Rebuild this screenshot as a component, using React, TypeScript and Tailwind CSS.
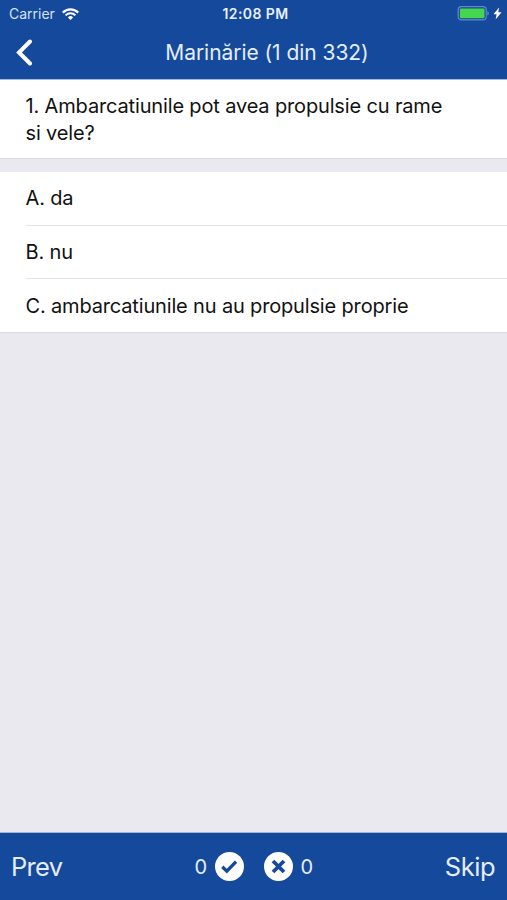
import React from 'react';

const answers = ['A. da', 'B. nu', 'C. ambarcatiunile nu au propulsie proprie'];

function StatusBar() {
  return (
    <div className="grid h-[27px] grid-cols-3 items-center pl-[9px] pr-[5px]">
      <div className="flex items-center gap-[7px]">
        <span className="text-[14px] leading-none text-[#d5e2f7]">Carrier</span>
        <svg width="17" height="12" viewBox="0 0 17 12" fill="none">
          <path d="M.8 4.600a10.900 10.900 0 0 1 15.400 0" stroke="white" strokeWidth="2.200" />
          <path d="M3.600 7.400a6.900 6.900 0 0 1 9.800 0" stroke="white" strokeWidth="2" />
          <path d="M8.500 12 5.900 9.400a3.700 3.700 0 0 1 5.200 0z" fill="white" />
        </svg>
      </div>
      <span className="text-center text-[14px] font-semibold leading-none tracking-[0.4px] text-[#e8f0fc]">12:08 PM</span>
      <div className="flex items-center justify-end gap-1">
        <svg width="32" height="15" viewBox="0 0 32 15">
          <rect x="1.200" y="0.700" width="28" height="13.200" rx="3.200" fill="none" stroke="#5f8bc6" strokeWidth="1.200" />
          <rect x="2.900" y="2.400" width="24.600" height="9.800" rx="1.200" fill="#45d650" />
          <path d="M30.300 5v4.600c1-.4 1.500-1.300 1.500-2.300s-.5-1.900-1.500-2.300z" fill="#5f8bc6" />
        </svg>
        <svg width="9" height="13" viewBox="0 0 9 13">
          <path d="M6.100.4.500 7.300h3.100l-1 5.300 5.900-7.300H5.300z" fill="white" />
        </svg>
      </div>
    </div>
  );
}

export default function App() {
  return (
    <div className="flex h-[900px] w-[507px] flex-col overflow-hidden bg-[#eae9ef] font-['Inter',sans-serif] text-[#111]">
      <header className="h-[80px] shrink-0 border-b border-[#a3b8da] bg-[#15499b]">
        <StatusBar />
        <div className="grid h-[51px] grid-cols-[80px_1fr_80px] items-center">
          <button className="pl-[16px]" aria-label="Back">
            <svg width="17" height="27" viewBox="0 0 17 27" fill="none">
              <path d="M14 2.500 3 13.500l11 11" stroke="white" strokeWidth="4" strokeLinecap="round" strokeLinejoin="miter" />
            </svg>
          </button>
          <h1 className="whitespace-nowrap pl-[27px] text-center text-[21px] tracking-[-0.05px] text-[#e4edfb]">Marinărie (1 din 332)</h1>
        </div>
      </header>

      <main className="flex-1">
        <div className="h-[79px] border-b border-[#dcdbe1] bg-white pl-[25.500px] pr-14 pt-[13px]">
          <p className="text-[20px] leading-[27px] tracking-[-0.150px]">1. Ambarcatiunile pot avea propulsie cu rame si vele?</p>
        </div>
        <ul className="mt-[13px] border-b border-[#dcdbe1] bg-white pl-[25.500px]">
          {answers.map((answer) => (
            <li key={answer} className="flex h-[53.500px] items-center border-b border-[#e6e6ea] text-[20px] tracking-[-0.160px] last:h-[53px] last:border-b-0">
              {answer}
            </li>
          ))}
        </ul>
      </main>

      <footer className="grid h-[68px] shrink-0 grid-cols-3 items-center border-t border-[#9db6dc] bg-[#15499b] px-[12px] text-[#e4edfb]">
        <button className="-ml-px pt-[2px] text-left text-[25.500px] tracking-[-0.700px]">Prev</button>
        <div className="flex items-center justify-center">
          <span className="mr-2 text-[20px] tracking-[-0.5px]">0</span>
          <svg width="29" height="29" viewBox="0 0 29 29" fill="none">
            <circle cx="14.500" cy="14.500" r="14.500" fill="white" />
            <path d="m7.300 14.800 4.500 4.300 9.300-9.400" stroke="#15499b" strokeWidth="3.300" />
          </svg>
          <svg className="ml-5" width="29" height="29" viewBox="0 0 29 29" fill="none">
            <circle cx="14.500" cy="14.500" r="14.500" fill="white" />
            <path d="m9 9 11 11M20 9 9 20" stroke="#15499b" strokeWidth="3.800" />
          </svg>
          <span className="ml-2 text-[20px] tracking-[-0.5px]">0</span>
        </div>
        <button className="pt-[2px] text-right text-[25.500px] tracking-[-0.500px]">Skip</button>
      </footer>
    </div>
  );
}
